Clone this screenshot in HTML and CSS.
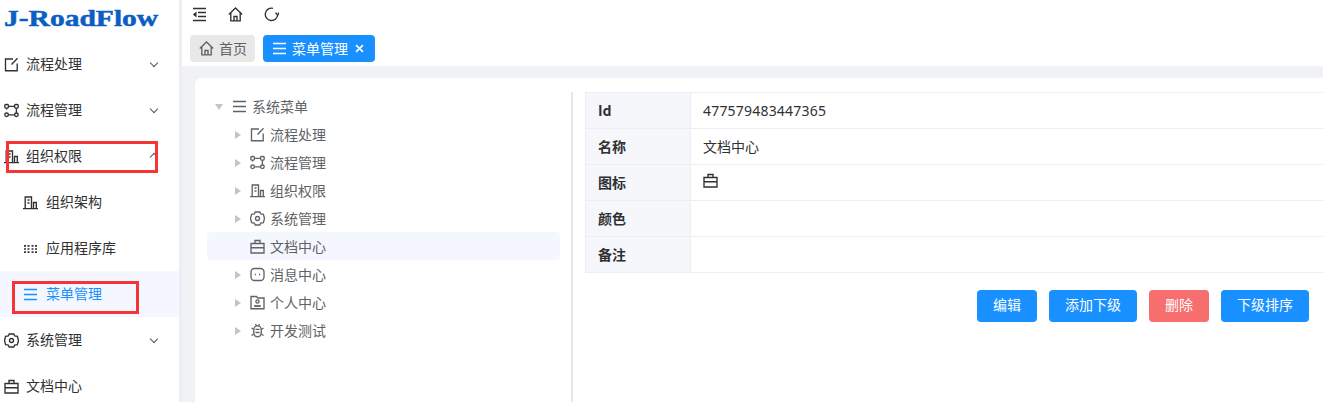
FILE: index.html
```html
<!DOCTYPE html>
<html lang="zh">
<head>
<meta charset="utf-8">
<title>J-RoadFlow</title>
<link rel="stylesheet" href="styles.css">
</head>
<body>
<svg class="sprite" xmlns="http://www.w3.org/2000/svg">
  <symbol id="i-edit" viewBox="0 0 15 15"><path d="M9 2H1.500v11.700h11.700V6.500M13.500 1.200 7.500 7.500"/></symbol>
  <symbol id="i-flow" viewBox="0 0 15 15"><rect x=".8" y="1.500" width="3.600" height="3.600" rx="1"/><rect x="10.600" y="1.500" width="3.600" height="3.600" rx="1"/><rect x=".8" y="10" width="3.600" height="3.600" rx="1.800"/><rect x="10.600" y="10" width="3.600" height="3.600" rx="1.800"/><path d="M4.400 3.300h6.200M12.400 5.100V10M4.400 11.800h6.200M2.600 5.100v1.400"/></symbol>
  <symbol id="i-org" viewBox="0 0 15 15"><path d="M0 13.600h15M2.200 13.500V2h6.300v11.500M10.500 13.500V7.500h2.800v6M4.500 5h2M4.500 8h2"/></symbol>
  <symbol id="i-grid" viewBox="0 0 15 15"><path d="M1 4.800h2M4.500 4.800h2M8.500 4.800h2M12 4.800h2M1 8h2M4.500 8h2M8.500 8h2M12 8h2M1 11.200h2M4.500 11.200h2M8.500 11.200h2M12 11.200h2" stroke-width="1.700"/></symbol>
  <symbol id="i-menu" viewBox="0 0 15 15"><path d="M1 2.500h13M1 7.500h13M1 12.500h13"/></symbol>
  <symbol id="i-gear" viewBox="0 0 15 15"><path d="M5.200 1h4.600l.9 2 2.700.4 1.100 4.100-1.100 4.100-2.700.4-.9 2H5.200l-.9-2-2.700-.4L.5 7.500l1.100-4.100 2.700-.4z"/><circle cx="7.500" cy="7.500" r="2"/></symbol>
  <symbol id="i-case" viewBox="0 0 15 15"><path d="M1 4.500h13v9.500H1zM5 4.500V1.500h5v3M1 8.700h13"/></symbol>
  <symbol id="i-msg" viewBox="0 0 15 15"><rect x="1" y="1.500" width="13" height="12" rx="3.500"/><path d="M4.800 7.500h1.200M9 7.500h1.200"/></symbol>
  <symbol id="i-person" viewBox="0 0 15 15"><path d="M1 1.500h5.500L8 3h6v10.700H1z"/><circle cx="7.500" cy="6.500" r="1.600"/><path d="M4.200 11h6.600" stroke-width="1.800"/></symbol>
  <symbol id="i-bug" viewBox="0 0 15 15"><rect x="3.800" y="2.800" width="7.400" height="11" rx="3.700"/><path d="M5.500 6.300h4M5.500 9.500h4M1.500 5l2.300 1.500M13.500 5l-2.300 1.500M1.500 12.500l2.300-1.500M13.500 12.500 11.200 11M5.500 1l1 1.800M9.500 1l-1 1.800"/></symbol>
  <symbol id="i-home" viewBox="0 0 15 15"><path d="M.8 7.500 7.500 1l6.700 6.500M2.800 5.800v8h9.400v-8M6 13.800V9.500h3v4.300"/></symbol>
  <symbol id="i-refresh" viewBox="0 0 15 15"><path d="M9 1.300A6.200 6.200 0 1 0 13.700 7.500"/><path d="M11.500 5.800 13.700 8l1.300-2.400"/></symbol>
  <symbol id="i-indent" viewBox="0 0 15 15"><path d="M1 1.500h13M6 5.500h8M6 9.500h8M1 13.500h13"/><path class="fill" d="M4.500 4.500v6L.8 7.500z"/></symbol>
  <symbol id="i-x" viewBox="0 0 10 10"><path d="M1.200 1.200l7.600 7.600M8.800 1.200 1.200 8.800"/></symbol>
</svg>

<aside class="sidebar">
  <div class="logo"><span class="logo-text">J-RoadFlow</span></div>
  <nav class="nav">
    <a class="nav-row"><svg class="ic"><use href="#i-edit"/></svg><span class="nav-label">流程处理</span><span class="chev"></span></a>
    <a class="nav-row"><svg class="ic"><use href="#i-flow"/></svg><span class="nav-label">流程管理</span><span class="chev"></span></a>
    <a class="nav-row"><svg class="ic"><use href="#i-org"/></svg><span class="nav-label">组织权限</span><span class="chev up"></span></a>
    <a class="nav-row sub"><svg class="ic"><use href="#i-org"/></svg><span class="nav-label">组织架构</span></a>
    <a class="nav-row sub"><svg class="ic"><use href="#i-grid"/></svg><span class="nav-label">应用程序库</span></a>
    <a class="nav-row sub active"><svg class="ic"><use href="#i-menu"/></svg><span class="nav-label">菜单管理</span></a>
    <a class="nav-row"><svg class="ic"><use href="#i-gear"/></svg><span class="nav-label">系统管理</span><span class="chev"></span></a>
    <a class="nav-row"><svg class="ic"><use href="#i-case"/></svg><span class="nav-label">文档中心</span></a>
  </nav>
</aside>

<main class="main">
  <div class="toolbar">
    <svg class="tool"><use href="#i-indent"/></svg>
    <svg class="tool"><use href="#i-home"/></svg>
    <svg class="tool"><use href="#i-refresh"/></svg>
  </div>
  <div class="tabs">
    <span class="tab"><svg class="ic"><use href="#i-home"/></svg>首页</span>
    <span class="tab on"><svg class="ic"><use href="#i-menu"/></svg>菜单管理<svg class="close"><use href="#i-x"/></svg></span>
  </div>
  <div class="content">
    <section class="card">
      <div class="tree">
        <div class="node root"><span class="tri down"></span><svg class="ic"><use href="#i-menu"/></svg>系统菜单</div>
        <div class="node"><span class="tri"></span><svg class="ic"><use href="#i-edit"/></svg>流程处理</div>
        <div class="node"><span class="tri"></span><svg class="ic"><use href="#i-flow"/></svg>流程管理</div>
        <div class="node"><span class="tri"></span><svg class="ic"><use href="#i-org"/></svg>组织权限</div>
        <div class="node"><span class="tri"></span><svg class="ic"><use href="#i-gear"/></svg>系统管理</div>
        <div class="node current"><span class="tri none"></span><svg class="ic"><use href="#i-case"/></svg>文档中心</div>
        <div class="node"><span class="tri"></span><svg class="ic"><use href="#i-msg"/></svg>消息中心</div>
        <div class="node"><span class="tri"></span><svg class="ic"><use href="#i-person"/></svg>个人中心</div>
        <div class="node"><span class="tri"></span><svg class="ic"><use href="#i-bug"/></svg>开发测试</div>
      </div>
      <div class="detail">
        <table class="info">
          <tr><th>Id</th><td class="num">477579483447365</td></tr>
          <tr><th>名称</th><td>文档中心</td></tr>
          <tr><th>图标</th><td><svg class="ic dark"><use href="#i-case"/></svg></td></tr>
          <tr><th>颜色</th><td></td></tr>
          <tr><th>备注</th><td></td></tr>
        </table>
        <div class="actions">
          <button class="btn">编辑</button>
          <button class="btn">添加下级</button>
          <button class="btn danger">删除</button>
          <button class="btn">下级排序</button>
        </div>
      </div>
    </section>
  </div>
</main>

<div class="mark mark-a"></div>
<div class="mark mark-b"></div>
</body>
</html>
```
FILE: styles.css
```css
* { box-sizing: border-box; }
html, body { height: 100%; }
body {
  margin: 0;
  display: flex;
  height: 402px;
  overflow: hidden;
  background: #fff;
  color: #303133;
  font: 14px/1.4 "Noto Sans CJK SC", "Liberation Sans", sans-serif;
}
.sprite { display: none; }
svg { fill: none; stroke: currentColor; stroke-width: 1.35; }
svg .fill { fill: currentColor; stroke: none; }
.ic { width: 15px; height: 15px; flex: none; }

.sidebar {
  width: 182px;
  flex: none;
  background: #fff;
  border-right: 3px solid #eceef2;
  overflow: hidden;
}
.logo { height: 41px; padding: 4px 0 0 4px; }
.logo-text {
  display: inline-block;
  transform: scaleX(1.23);
  transform-origin: 0 0;
  font: bold 24px/28px "Liberation Serif", serif;
  -webkit-text-stroke: .5px #0b5fc4;
  color: #0b5fc4;
  white-space: nowrap;
}
.nav-row {
  height: 46px;
  display: flex;
  align-items: center;
  padding: 0 22px 0 4px;
  gap: 7px;
  color: #303133;
}
.nav-label { flex: 1; }
.nav-row.sub { padding-left: 23px; gap: 8px; }
.nav-row.active { background: #f4f7ff; color: #1890ff; }
.chev {
  width: 6px;
  height: 6px;
  border: solid #555;
  border-width: 0 1px 1px 0;
  transform: translateY(-1px) rotate(45deg);
}
.chev.up { transform: translateY(1px) rotate(225deg); }

.main { flex: 1; min-width: 0; display: flex; flex-direction: column; }
.toolbar { height: 35px; display: flex; align-items: center; gap: 21px; padding: 0 0 7px 10px; color: #303133; }
.tool { width: 15px; height: 15px; }
.tabs { height: 31px; display: flex; gap: 8px; padding-left: 8px; align-items: flex-start; }
.tab {
  height: 27px;
  display: flex;
  align-items: center;
  gap: 5px;
  padding: 0 8px 0 9px;
  border-radius: 4px;
  background: #e8e8e8;
  color: #606266;
}
.tab.on { background: #1890ff; color: #fff; padding: 0 11px 0 9px; gap: 5px; }
.close { width: 9px; height: 9px; margin-left: 2px; stroke-width: 1.8; }

.content { flex: 1; background: #f0f2f5; padding: 12px 0 0 13px; }
.card {
  height: 100%;
  background: #fff;
  border-radius: 6px 0 0 0;
  display: flex;
  padding-top: 14px;
}
.tree {
  width: 378px;
  flex: none;
  border-right: 2px solid #e4e7ed;
  padding: 0 11px 0 12px;
  color: #606266;
}
.node {
  height: 28px;
  display: flex;
  align-items: center;
  gap: 5px;
  padding: 1px 0 0 28px;
  border-radius: 4px;
}
.node.root { padding-left: 8px; }
.node.current { background: #f5f7ff; }
.tri {
  width: 0;
  height: 0;
  margin-right: 4px;
  border: 4px solid transparent;
  border-left: 6px solid #c0c4cc;
  border-right-width: 0;
}
.tri.none { visibility: hidden; }
.tri.down { border: 4px solid transparent; border-top: 6px solid #c0c4cc; border-bottom-width: 0; margin-right: 4px; }

.detail { flex: 1; min-width: 0; padding-left: 12px; }
.info { width: 100%; border-collapse: collapse; }
.info th, .info td { height: 36px; border: 1px solid #ebeef5; padding: 0 12px; text-align: left; font-size: 14px; }
.info th { width: 105px; background: #f5f7fa; font-weight: bold; color: #303133; }
.info td { color: #303133; border-right: 0; }
.info .num { font-family: "Noto Sans", sans-serif; letter-spacing: .2px; }
.info .dark { display: block; transform: translateY(-2px); }
.actions { display: flex; justify-content: flex-end; gap: 12px; padding: 17px 14px 0 0; }
.btn {
  height: 32px;
  padding: 0 16px 5px;
  border: 0;
  border-radius: 4px;
  background: #1890ff;
  color: #fff;
  font: 14px "Noto Sans CJK SC", sans-serif;
}
.btn.danger { background: #f76e6e; }

.mark { position: absolute; border: 3px solid #f53535; pointer-events: none; }
.mark-a { left: 6px; top: 141px; width: 152px; height: 32px; }
.mark-b { left: 12px; top: 281px; width: 127px; height: 33px; }
```
